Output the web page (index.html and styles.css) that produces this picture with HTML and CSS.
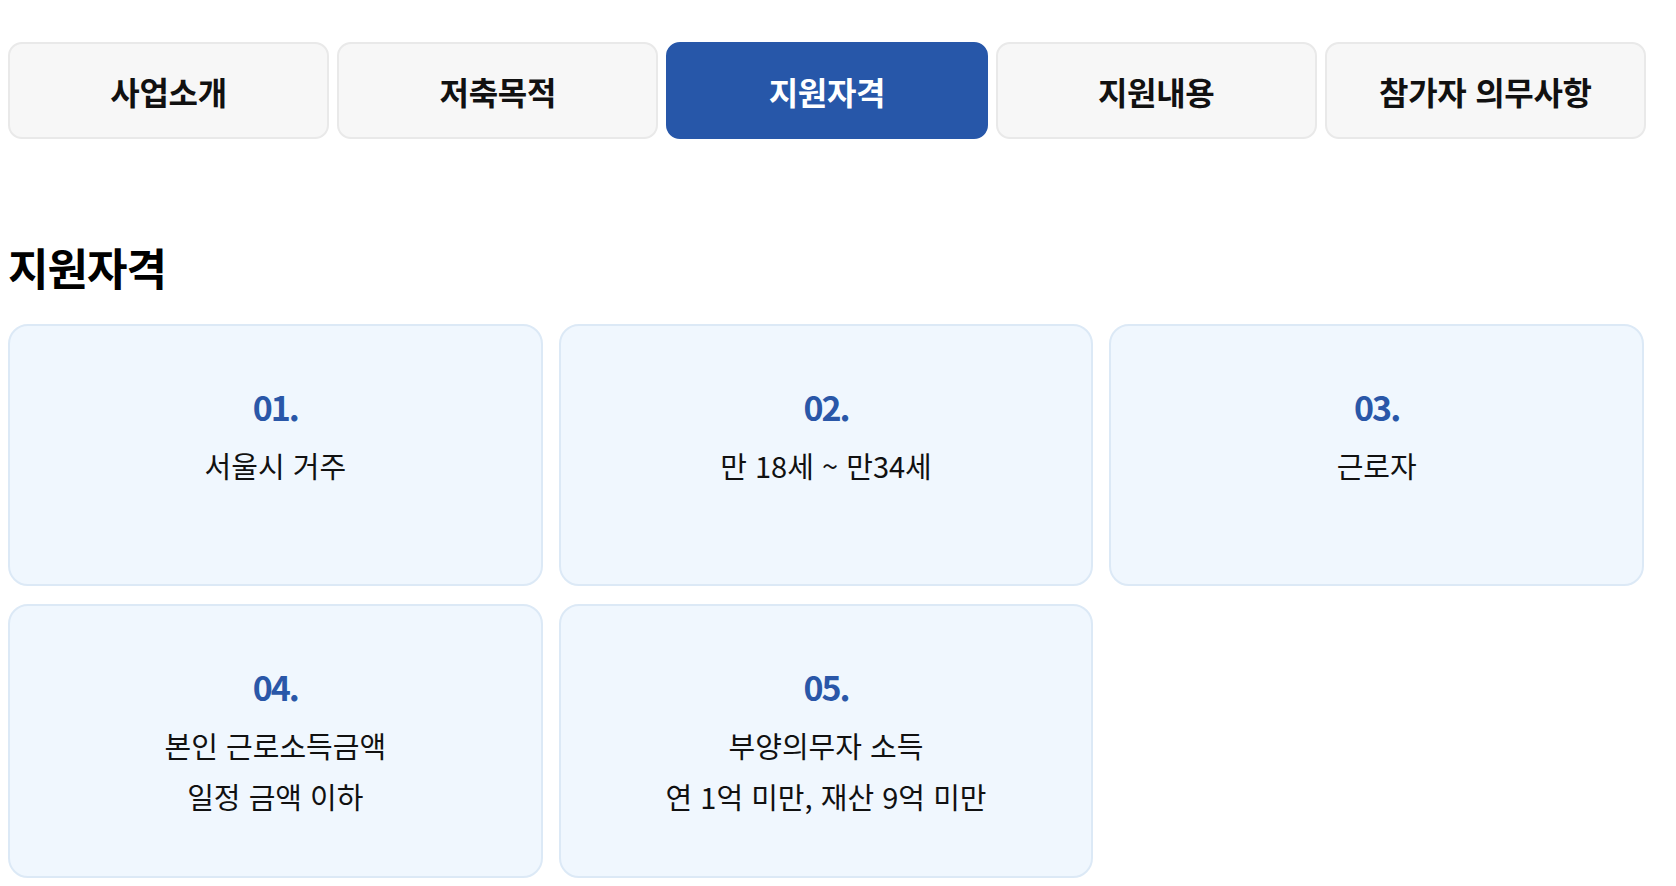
FILE: index.html
```html
<!DOCTYPE html>
<html lang="ko">
<head>
<meta charset="utf-8">
<title>지원자격</title>
<link rel="stylesheet" href="styles.css">
</head>
<body>
<div class="page">
  <nav class="tabs">
    <a class="tab">사업소개</a>
    <a class="tab">저축목적</a>
    <a class="tab active">지원자격</a>
    <a class="tab">지원내용</a>
    <a class="tab">참가자 의무사항</a>
  </nav>
  <h2 class="title">지원자격</h2>
  <div class="cards">
    <div class="card"><p class="num">01.</p><p class="desc">서울시 거주</p></div>
    <div class="card"><p class="num">02.</p><p class="desc">만 18세 ~ 만34세</p></div>
    <div class="card"><p class="num">03.</p><p class="desc">근로자</p></div>
    <div class="card"><p class="num">04.</p><p class="desc">본인 근로소득금액<br>일정 금액 이하</p></div>
    <div class="card"><p class="num">05.</p><p class="desc">부양의무자 소득<br>연 1억 미만, 재산 9억 미만</p></div>
  </div>
</div>
</body>
</html>
```

FILE: styles.css
```css
html, body {
  margin: 0;
  padding: 0;
  background: #ffffff;
  font-family: "Noto Sans CJK KR", "Noto Sans", sans-serif;
  color: #111111;
}

.page {
  width: 1638px;
  margin-left: 8px;
  padding-top: 42px;
}

.tabs {
  display: grid;
  grid-template-columns: repeat(5, 1fr);
  gap: 8px;
}

.tab {
  height: 97px;
  box-sizing: border-box;
  display: flex;
  align-items: center;
  justify-content: center;
  background: #f7f7f7;
  border: 2px solid #e9e9e9;
  border-radius: 14px;
  font-size: 32px;
  font-weight: 700;
  color: #111111;
  letter-spacing: -0.3px;
}

.tab.active {
  background: #2757a9;
  border-color: #2757a9;
  color: #ffffff;
}

.title {
  margin: 100px 0 29px;
  font-size: 44px;
  line-height: 56px;
  font-weight: 700;
  color: #000000;
  letter-spacing: -1px;
}

.cards {
  width: 1636px;
  display: grid;
  grid-template-columns: repeat(3, 1fr);
  gap: 18px 16px;
}

.card {
  min-height: 262px;
  box-sizing: border-box;
  padding: 55px 20px 54px;
  background: #f0f7fe;
  border: 2px solid #dce9f6;
  border-radius: 20px;
  text-align: center;
}

.num {
  margin: 0 0 8px;
  font-size: 34px;
  line-height: 51px;
  font-weight: 700;
  color: #2a57a8;
  letter-spacing: -2px;
}

.desc {
  margin: 0;
  font-size: 29px;
  line-height: 51px;
  font-weight: 400;
  color: #111111;
}
```
